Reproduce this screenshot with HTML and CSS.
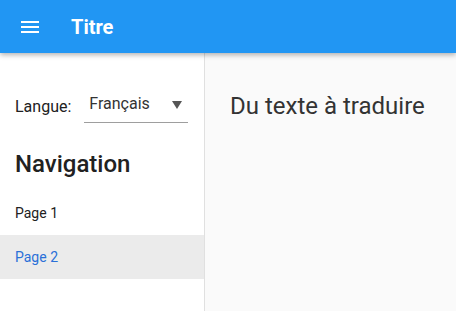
FILE: index.html
```html
<!DOCTYPE html>
<html lang="fr">
<head>
  <meta charset="UTF-8" />
  <title>Titre</title>
  <link rel="stylesheet" href="styles.css">
</head>
<body>
  <header class="toolbar">
    <svg class="menu-icon" width="24" height="24" viewBox="0 0 24 24">
      <path d="M3 18h18v-2H3v2zm0-5h18v-2H3v2zm0-7v2h18V6H3z" fill="#fff"/>
    </svg>
    <div class="title">Titre</div>
  </header>

  <div class="layout">
    <aside class="sidebar">
      <div class="lang-row">
        <label class="lang-label">Langue:</label>
        <div class="select">
          <span>Français</span>
          <svg class="arrow" width="10" height="8" viewBox="0 0 10 8">
            <polygon points="0,0 10,0 5,8" fill="#555"/>
          </svg>
        </div>
      </div>
      <h2 class="nav-title">Navigation</h2>
      <nav class="nav">
        <a href="#" class="nav-item">Page 1</a>
        <a href="#" class="nav-item active">Page 2</a>
      </nav>
    </aside>
    <main class="content">
      <p class="text">Du texte à traduire</p>
    </main>
  </div>
</body>
</html>
```

FILE: styles.css
```css
html, body {
  margin: 0;
  padding: 0;
  height: 100%;
  font-family: Roboto, 'Liberation Sans', sans-serif;
  color: #212121;
}

body {
  display: flex;
  flex-direction: column;
  overflow: hidden;
}

.toolbar {
  height: 53px;
  flex: none;
  display: flex;
  align-items: center;
  padding-left: 18px;
  background-color: #2196f3;
  box-shadow: 0 2px 5px rgba(0, 0, 0, 0.3);
  position: relative;
  z-index: 2;
}

.menu-icon {
  display: block;
}

.title {
  margin-left: 29px;
  font-size: 20px;
  line-height: 24px;
  font-weight: bold;
  color: #fff;
}

.layout {
  flex: 1;
  display: flex;
}

.sidebar {
  width: 204px;
  flex: none;
  background: #fff;
  border-right: 1px solid #e0e0e0;
}

.lang-row {
  display: flex;
  align-items: flex-start;
  margin-top: 37px;
  padding-left: 15px;
}

.lang-label {
  margin-top: 7px;
  font-size: 16px;
  line-height: 20px;
}

.select {
  margin-left: 13px;
  width: 104px;
  height: 33px;
  box-sizing: border-box;
  display: flex;
  justify-content: space-between;
  align-items: flex-start;
  padding: 4px 6px 0 5px;
  border-bottom: 1px solid #9e9e9e;
  font-size: 16px;
  line-height: 20px;
  color: #333;
}

.arrow {
  margin-top: 7px;
}

.nav-title {
  margin: 27px 0 13px;
  padding-left: 15px;
  font-size: 24px;
  line-height: 28px;
  font-weight: 500;
}

.nav-item {
  display: block;
  height: 44px;
  line-height: 44px;
  padding-left: 15px;
  font-size: 14px;
  color: #212121;
  text-decoration: none;
}

.nav-item.active {
  background: #ebebeb;
  color: #2a70d8;
}

.content {
  flex: 1;
  background: #fafafa;
  padding: 39px 25px 0;
}

.text {
  margin: 0;
  font-size: 24px;
  line-height: 28px;
  color: #333;
}
```
